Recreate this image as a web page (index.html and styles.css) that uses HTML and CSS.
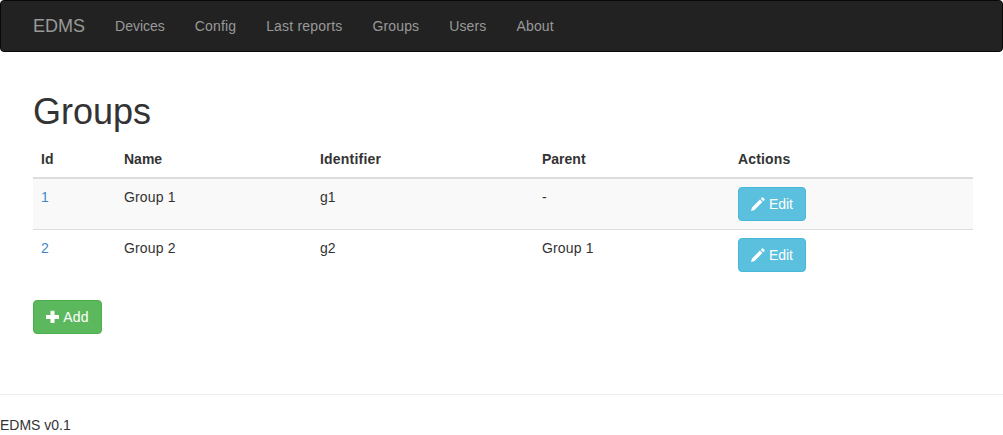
FILE: index.html
```html
<!DOCTYPE html>
<html lang="en">
<head>
<meta charset="utf-8">
<title>EDMS - Groups</title>
<link rel="stylesheet" href="styles.css">
</head>
<body>
<nav class="navbar">
  <a class="brand" href="#">EDMS</a>
  <ul class="nav">
    <li><a href="#">Devices</a></li>
    <li><a class="track" href="#">Config</a></li>
    <li><a class="track-wide" href="#">Last reports</a></li>
    <li><a class="track" href="#">Groups</a></li>
    <li><a class="track" href="#">Users</a></li>
    <li><a class="track" href="#">About</a></li>
  </ul>
</nav>
<main class="container">
  <h1>Groups</h1>
  <table class="table">
    <colgroup><col class="c-id"><col class="c-name"><col class="c-ident"><col class="c-parent"><col class="c-actions"></colgroup>
    <thead>
      <tr><th>Id</th><th>Name</th><th class="track-wide">Identifier</th><th>Parent</th><th class="track">Actions</th></tr>
    </thead>
    <tbody>
      <tr>
        <td><a href="#">1</a></td><td class="track">Group 1</td><td>g1</td><td>-</td>
        <td><a class="btn btn-info" href="#"><svg class="icon" viewBox="0 0 14 14"><path d="M0 14L1 10.5L8.9 2.6L11.4 5.1L3.5 13ZM9.7 1.8L11 .5Q11.5 0 12 .5L13.5 2Q14 2.5 13.5 3L12.2 4.3Z"/></svg> Edit</a></td>
      </tr>
      <tr>
        <td><a href="#">2</a></td><td class="track">Group 2</td><td>g2</td><td class="track">Group 1</td>
        <td><a class="btn btn-info" href="#"><svg class="icon" viewBox="0 0 14 14"><path d="M0 14L1 10.5L8.9 2.6L11.4 5.1L3.5 13ZM9.7 1.8L11 .5Q11.5 0 12 .5L13.5 2Q14 2.5 13.5 3L12.2 4.3Z"/></svg> Edit</a></td>
      </tr>
    </tbody>
  </table>
  <a class="btn btn-success track-wide" href="#"><svg class="icon" viewBox="0 0 14 14"><path d="M5 .7H8Q8.5.7 8.5 1.2V5H12.5Q13 5 13 5.5V8.5Q13 9 12.5 9H8.5V12.5Q8.5 13 8 13H5Q4.5 13 4.5 12.5V9H.5Q0 9 0 8.5V5.5Q0 5 .5 5H4.5V1.2Q4.5.7 5 .7Z"/></svg> Add</a>
</main>
<hr>
<footer>EDMS v0.1</footer>
</body>
</html>
```

FILE: styles.css
```css
* { box-sizing: border-box; }

body {
  margin: 0;
  background: #fff;
  color: #333;
  font: 14px/20px "Liberation Sans", Arial, sans-serif;
}

a { color: #428bca; text-decoration: none; }

.track { letter-spacing: .14px; }
.track-wide { letter-spacing: .2px; }

.navbar {
  display: flex;
  height: 52px;
  padding-left: 17px;
  background: #222;
  border: 1px solid #080808;
  border-radius: 4px;
}

.navbar a { display: block; padding: 15px; color: #999; }
.navbar .brand { font-size: 18px; }
.nav { display: flex; margin: 0; padding: 0; list-style: none; }

.container { width: 940px; margin: 40px 0 60px 33px; }

h1 { margin: 0 0 10px; font-size: 36px; font-weight: 500; line-height: 39px; }

.table {
  width: 100%;
  margin-bottom: 20px;
  table-layout: fixed;
  border-collapse: separate;
  border-spacing: 0;
}

.c-id { width: 83px; }
.c-name { width: 196px; }
.c-ident { width: 222px; }
.c-parent { width: 196px; }
.c-actions { width: 243px; }

th { padding: 8px; text-align: left; border-bottom: 2px solid #ddd; }
td { padding: 8px; vertical-align: top; }
tbody tr:first-child td { background: #f9f9f9; }
tbody tr + tr td { border-top: 1px solid #ddd; }

.btn {
  display: block;
  width: fit-content;
  padding: 6px 12px;
  color: #fff;
  white-space: nowrap;
  border: 1px solid;
  border-radius: 4px;
}

.btn-info { background: #5bc0de; border-color: #46b8da; }
.btn-success { background: #5cb85c; border-color: #4cae4c; }

.icon { width: 14px; height: 14px; fill: #fff; vertical-align: -2px; }

hr { margin: 0 0 20px; border: 0; border-top: 1px solid #eee; }
```
